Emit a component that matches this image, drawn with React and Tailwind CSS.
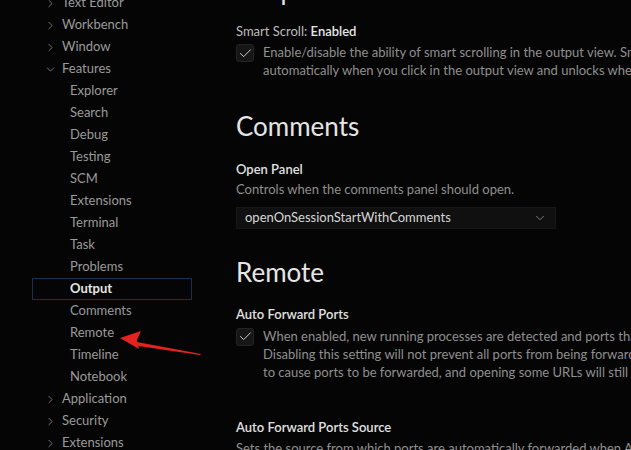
import { ChevronRight, ChevronDown, Check } from "lucide-react";

const tree = [
  { label: "Text Editor", kind: "closed" },
  { label: "Workbench", kind: "closed" },
  { label: "Window", kind: "closed" },
  { label: "Features", kind: "open" },
  { label: "Explorer" },
  { label: "Search" },
  { label: "Debug" },
  { label: "Testing" },
  { label: "SCM" },
  { label: "Extensions" },
  { label: "Terminal" },
  { label: "Task" },
  { label: "Problems" },
  { label: "Output", active: true },
  { label: "Comments" },
  { label: "Remote" },
  { label: "Timeline" },
  { label: "Notebook" },
  { label: "Application", kind: "closed" },
  { label: "Security", kind: "closed" },
  { label: "Extensions", kind: "closed" },
];

function TreeRow({ item }) {
  if (item.kind) {
    const Icon = item.kind === "open" ? ChevronDown : ChevronRight;
    return (
      <div className="h-[22px] flex items-center pl-[44px] text-[#9a9a9a]">
        <Icon className="w-[13px] h-[13px] mr-[5px] text-[#8a8a8a]" strokeWidth={1.5} />
        <span>{item.label}</span>
      </div>
    );
  }
  if (item.active) {
    return (
      <div className="h-[22px] flex items-center ml-[32px] mr-[18px] pl-[37px] border border-[#1b3050] font-bold text-[#e6e6e6]">
        {item.label}
      </div>
    );
  }
  return <div className="h-[22px] flex items-center pl-[70px] text-[#9a9a9a]">{item.label}</div>;
}

function CheckBox() {
  return (
    <div className="w-[18px] h-[18px] mt-[1px] shrink-0 rounded-[3px] bg-[#161616] border border-[#232323] flex items-center justify-center">
      <Check className="w-[15px] h-[15px] text-[#d8d8d8]" strokeWidth={1.5} />
    </div>
  );
}

function Desc({ lines }) {
  return (
    <div className="text-[#8f8f8f] leading-[18px] whitespace-nowrap">
      {lines.map((l, i) => (
        <div key={i}>{l}</div>
      ))}
    </div>
  );
}

export default function App() {
  return (
    <div
      className="relative w-[631px] h-[450px] overflow-hidden bg-[#050505] text-[13px] flex"
      style={{ fontFamily: '"Segoe UI", Lato, "Noto Sans", sans-serif' }}
    >
      {/* sidebar */}
      <div className="w-[210px] shrink-0 -mt-[8px]">
        {tree.map((t, i) => (
          <TreeRow key={i} item={t} />
        ))}
      </div>

      {/* settings */}
      <div className="flex-1 pl-[26px] flex flex-col">
        <div className="-mt-[28px] h-[36px] leading-[36px] text-[26px] text-[#e6e6e6]">Output</div>

        <div className="mt-[13px] h-[20px] leading-[20px] text-[#bdbdbd]">
          Smart Scroll: <span className="font-semibold text-[#e6e6e6]">Enabled</span>
        </div>
        <div className="mt-[2px] flex gap-[9px]">
          <CheckBox />
          <Desc
            lines={[
              "Enable/disable the ability of smart scrolling in the output view. Smart scrolling allows you to lock scrolling",
              "automatically when you click in the output view and unlocks when you click in the last line.",
            ]}
          />
        </div>

        <div className="mt-[29px] h-[36px] leading-[36px] text-[26px] text-[#e6e6e6]">Comments</div>

        <div className="mt-[15px] h-[20px] leading-[20px] font-semibold text-[#e0e0e0]">Open Panel</div>
        <div className="mt-[1px]">
          <Desc lines={["Controls when the comments panel should open."]} />
        </div>
        <div className="mt-[9px] w-[320px] h-[26px] bg-[#101010] border border-[#161616] flex items-center justify-between pl-[8px] pr-[8px] text-[#d6d6d6]">
          <span>openOnSessionStartWithComments</span>
          <ChevronDown className="w-[14px] h-[14px] text-[#8a8a8a]" strokeWidth={1.5} />
        </div>

        <div className="mt-[25px] h-[36px] leading-[36px] text-[26px] text-[#e6e6e6]">Remote</div>

        <div className="mt-[14px] h-[20px] leading-[20px] font-semibold text-[#e0e0e0]">Auto Forward Ports</div>
        <div className="mt-[3px] flex gap-[9px]">
          <CheckBox />
          <Desc
            lines={[
              "When enabled, new running processes are detected and ports that they listen on are forwarded.",
              "Disabling this setting will not prevent all ports from being forwarded. Even when disabled, extensions will still be able",
              "to cause ports to be forwarded, and opening some URLs will still cause ports to forwarded.",
            ]}
          />
        </div>

        <div className="mt-[36px] h-[20px] leading-[20px] font-semibold text-[#e0e0e0]">Auto Forward Ports Source</div>
        <div className="mt-[2px]">
          <Desc lines={["Sets the source from which ports are automatically forwarded when Auto Forward Ports is true."]} />
        </div>
      </div>

      {/* annotation arrow */}
      <svg className="absolute left-0 top-0 pointer-events-none" width="631" height="450">
        <polygon points="201,354 137,342 138,346 200,355" fill="#e3231d" />
        <polygon points="120,338 141,331 137,340 139,349" fill="#e3231d" />
      </svg>
    </div>
  );
}
